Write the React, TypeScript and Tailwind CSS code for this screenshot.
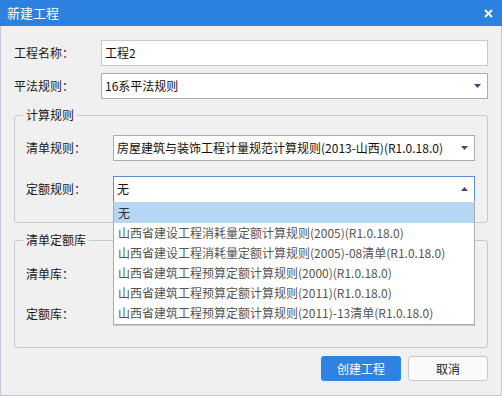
import type { ReactNode } from 'react'

const font = {
  fontFamily: '"Noto Sans CJK SC", "Microsoft YaHei", sans-serif',
}

const options = [
  '无',
  '山西省建设工程消耗量定额计算规则(2005)(R1.0.18.0)',
  '山西省建设工程消耗量定额计算规则(2005)-08清单(R1.0.18.0)',
  '山西省建筑工程预算定额计算规则(2000)(R1.0.18.0)',
  '山西省建筑工程预算定额计算规则(2011)(R1.0.18.0)',
  '山西省建筑工程预算定额计算规则(2011)-13清单(R1.0.18.0)',
]

function Caret({ up = false }: { up?: boolean }) {
  return (
    <svg width="7" height="4" viewBox="0 0 7 4" className="shrink-0">
      {up ? (
        <path d="M3.5 0 L7 4 L0 4 Z" fill="#5e3c6c" />
      ) : (
        <path d="M0 0 L7 0 L3.5 4 Z" fill="#5e3c6c" />
      )}
    </svg>
  )
}

function Select({
  value,
  focused = false,
  className = '',
  children,
}: {
  value: string
  focused?: boolean
  className?: string
  children?: ReactNode
}) {
  return (
    <div className={`relative flex-1 ${className}`}>
      <div
        className={`flex h-full items-center justify-between border bg-white pl-[3px] pr-[6px] text-[12px] text-[#111] ${
          focused ? 'border-[#5b8fdc]' : 'border-[#acacac]'
        }`}
      >
        <span className="truncate">{value}</span>
        <Caret up={focused} />
      </div>
      {children}
    </div>
  )
}

function Row({ label, labelWidth, children }: { label: string; labelWidth: string; children: ReactNode }) {
  return (
    <div className="flex items-center">
      <span className={`${labelWidth} shrink-0 text-[12px] text-[#1a1a1a]`}>{label}</span>
      {children}
    </div>
  )
}

function Group({ title, className, children }: { title: string; className: string; children: ReactNode }) {
  return (
    <fieldset className={`rounded-[3px] border border-[#c9c9c9] px-[8px] ${className}`}>
      <legend className="px-[3px] text-[12px] leading-[16px] text-[#1a1a1a]">{title}</legend>
      <div className="flex flex-col pl-[3px] pr-[4px]">{children}</div>
    </fieldset>
  )
}

export default function App() {
  return (
    <div
      style={font}
      className="flex h-[396px] w-[502px] flex-col border border-[#c3c8d2] bg-[#f0f0f0]"
    >
      <div className="flex h-[26px] shrink-0 items-center justify-between bg-[#2b80e0] pl-[7px] pr-[9px] -mx-px -mt-px">
        <span className="text-[13px] text-white">新建工程</span>
        <svg width="9" height="9" viewBox="0 0 9 9">
          <path d="M1 1 L8 8 M8 1 L1 8" stroke="white" strokeWidth="1.8" />
        </svg>
      </div>

      <div className="flex flex-col px-[13px] pt-[14px]">
        <Row label="工程名称：" labelWidth="w-[87px]">
          <div className="flex h-[26px] flex-1 items-center border border-[#c8c8c8] bg-white pl-[3px] text-[12px] text-[#111]">
            工程2
          </div>
        </Row>
        <div className="mt-[7px]">
          <Row label="平法规则：" labelWidth="w-[87px]">
            <Select value="16系平法规则" className="h-[26px]" />
          </Row>
        </div>

        <Group title="计算规则" className="mt-[8px] pb-[20px] pt-[12px]">
          <Row label="清单规则：" labelWidth="w-[87px]">
            <Select value="房屋建筑与装饰工程计量规范计算规则(2013-山西)(R1.0.18.0)" className="h-[26px]" />
          </Row>
          <div className="mt-[15px]">
            <Row label="定额规则：" labelWidth="w-[87px]">
              <Select value="无" focused className="h-[26px]">
                <ul className="absolute left-0 right-0 top-[25px] z-10 border border-t-0 border-[#acacac] bg-white pb-px pt-px text-[12px] text-[#555]">
                  {options.map((o, i) => (
                    <li
                      key={o}
                      className={`flex items-center whitespace-nowrap pl-[4px] ${
                        i === 0 ? 'h-[21px] bg-[#b5d7f4] text-[#333]' : 'h-[20px]'
                      }`}
                    >
                      {o}
                    </li>
                  ))}
                </ul>
              </Select>
            </Row>
          </div>
        </Group>

        <Group title="清单定额库" className="mt-[9px] pb-[21px] pt-[13px]">
          <Row label="清单库：" labelWidth="w-[87px]">
            <div className="h-[26px] flex-1 border border-[#c8c8c8] bg-white" />
          </Row>
          <div className="mt-[14px]">
            <Row label="定额库：" labelWidth="w-[87px]">
              <div className="h-[25px] flex-1 border border-[#c8c8c8] bg-white" />
            </Row>
          </div>
        </Group>

        <div className="mt-[8px] flex justify-end gap-[7px]">
          <button
            type="button"
            className="h-[25px] w-[80px] rounded-[3px] bg-[#2d82e2] text-[12px] text-white"
          >
            创建工程
          </button>
          <button
            type="button"
            className="h-[25px] w-[80px] rounded-[3px] border border-[#c8c8c8] bg-[#fafafa] text-[12px] text-[#222]"
          >
            取消
          </button>
        </div>
      </div>
    </div>
  )
}
